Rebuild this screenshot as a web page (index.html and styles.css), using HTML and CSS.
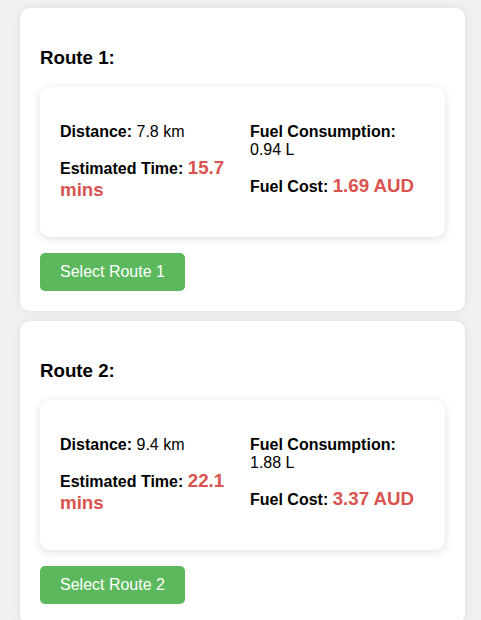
FILE: index.html
```html
<!DOCTYPE html>
<html lang="en">
<head>
<meta charset="utf-8">
<title>Routes</title>
<link rel="stylesheet" href="styles.css">
</head>
<body>
<div class="routes">
  <div class="route-card">
    <h3 class="route-title">Route 1:</h3>
    <div class="route-details">
      <div class="detail-col">
        <p class="detail"><strong>Distance:</strong> 7.8 km</p>
        <p class="detail"><strong>Estimated Time:</strong> <span class="highlight">15.7 mins</span></p>
      </div>
      <div class="detail-col">
        <p class="detail"><strong>Fuel Consumption:</strong> 0.94 L</p>
        <p class="detail"><strong>Fuel Cost:</strong> <span class="highlight">1.69 AUD</span></p>
      </div>
    </div>
    <button class="select-btn">Select Route 1</button>
  </div>
  <div class="route-card">
    <h3 class="route-title">Route 2:</h3>
    <div class="route-details">
      <div class="detail-col">
        <p class="detail"><strong>Distance:</strong> 9.4 km</p>
        <p class="detail"><strong>Estimated Time:</strong> <span class="highlight">22.1 mins</span></p>
      </div>
      <div class="detail-col">
        <p class="detail"><strong>Fuel Consumption:</strong> 1.88 L</p>
        <p class="detail"><strong>Fuel Cost:</strong> <span class="highlight">3.37 AUD</span></p>
      </div>
    </div>
    <button class="select-btn">Select Route 2</button>
  </div>
</div>
</body>
</html>
```

FILE: styles.css
```css
html, body {
  margin: 0;
  padding: 0;
}
body {
  background: #f1f1f1;
  font-family: "Liberation Sans", Arial, Helvetica, sans-serif;
  font-size: 16px;
  color: #000;
}
.routes {
  padding: 8px 16px 0 20px;
  display: flex;
  flex-direction: column;
  gap: 10px;
}
.route-card {
  background: #fff;
  border-radius: 10px;
  padding: 20px;
  box-shadow: 0 0 10px rgba(0, 0, 0, 0.08);
}
.route-title {
  font-size: 18.72px;
  font-weight: bold;
  margin: 18.5px 0;
}
.route-details {
  background: #fff;
  border-radius: 10px;
  padding: 20px;
  box-shadow: 0 2px 10px rgba(0, 0, 0, 0.12);
  display: grid;
  grid-template-columns: 1fr 1fr;
  column-gap: 15px;
  margin-bottom: 16px;
}
.detail {
  margin: 16px 0;
}
.highlight {
  color: #d9534f;
  font-weight: bold;
  font-size: 18.7px;
}
.select-btn {
  display: block;
  background: #5cb85c;
  color: #fff;
  border: none;
  border-radius: 5px;
  padding: 10px 20px;
  font-family: "Liberation Sans", Arial, Helvetica, sans-serif;
  font-size: 16px;
  line-height: 18px;
  cursor: pointer;
}
```
